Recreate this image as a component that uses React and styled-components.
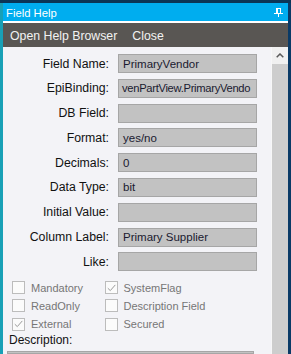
import React from 'react';
import styled, { createGlobalStyle } from 'styled-components';

const GlobalStyle = createGlobalStyle`
  html, body {
    margin: 0;
    padding: 0;
    background: #0b3556;
  }
  body {
    font-family: "Liberation Sans", Arial, sans-serif;
  }
`;

const Frame = styled.div`
  width: 291px;
  height: 354px;
  box-sizing: border-box;
  padding-top: 3px;
  background: #0b3556;
  display: flex;
  flex-direction: column;
  overflow: hidden;
`;

const Window = styled.div`
  flex: 1;
  min-height: 0;
  display: flex;
  flex-direction: column;
  border-left: 3px solid #18a0b6;
  border-right: 3px solid #0a3a66;
`;

const TitleBar = styled.div`
  height: 20px;
  box-sizing: border-box;
  border-bottom: 2px solid #ffffff;
  background: #00adef;
  color: #ffffff;
  font-size: 11.3px;
  display: flex;
  align-items: center;
  justify-content: space-between;
  padding: 1px 5px 0 3px;
`;

const MenuBar = styled.div`
  height: 24px;
  box-sizing: border-box;
  background: #595653;
  color: #f2f2f2;
  font-size: 12.3px;
  display: flex;
  align-items: center;
  gap: 15px;
  padding: 2px 0 0 7px;
`;

const MenuItem = styled.span`
  cursor: default;
`;

const Body = styled.div`
  flex: 1;
  min-height: 0;
  display: flex;
  overflow: hidden;
`;

const Form = styled.div`
  flex: 1;
  background: #f3f3f7;
  padding: 7px 14px 0 0;
  display: flex;
  flex-direction: column;
`;

const FieldGrid = styled.div`
  display: grid;
  grid-template-columns: 106px 1fr;
  grid-auto-rows: 19px;
  column-gap: 9px;
  row-gap: 5.8px;
  align-items: center;
`;

const Label = styled.div`
  text-align: right;
  font-size: 12.3px;
  color: #111111;
  white-space: nowrap;
`;

// long values are scrolled in the real control, so squeeze them to the edge
const Input = styled.div`
  height: 100%;
  box-sizing: border-box;
  border: 1px solid #a6a6a6;
  background: #c2c2c2;
  padding: ${({ $long }) => ($long ? '0 0 0 3px' : '0 4px')};
  font-size: ${({ $long }) => ($long ? '11.2px' : '11.5px')};
  letter-spacing: ${({ $long }) => ($long ? '-0.3px' : 'normal')};
  color: #1a1a30;
  display: flex;
  align-items: center;
  overflow: hidden;
  white-space: nowrap;
`;

const Checks = styled.div`
  display: grid;
  grid-template-columns: 92.5px 1fr;
  grid-auto-rows: 18.3px;
  padding-left: 9px;
  margin-top: 7px;
`;

const CheckItem = styled.div`
  display: flex;
  align-items: center;
  gap: 6px;
  font-size: 11px;
  color: #767676;
  white-space: nowrap;
`;

const Box = styled.span`
  width: 13px;
  height: 13px;
  box-sizing: border-box;
  border: 1px solid #bcbcbc;
  background: #fbfbfb;
  display: flex;
  align-items: center;
  justify-content: center;
  flex-shrink: 0;
`;

const DescLabel = styled.div`
  font-size: 12px;
  line-height: 15px;
  color: #111111;
  padding-left: 6px;
`;

const DescBox = styled.div`
  height: 40px;
  margin: 3px 3px 0 4px;
  border: 1px solid #a6a6a6;
  background: #c2c2c2;
`;

const Scrollbar = styled.div`
  width: 17px;
  box-sizing: border-box;
  border-left: 1px solid #f7f7f7;
  background: #cdcdcd;
  display: flex;
  flex-direction: column;
`;

const ArrowButton = styled.div`
  height: 17px;
  background: #f0f0f0;
  display: flex;
  align-items: center;
  justify-content: center;
`;

const PinIcon = () => (
  <svg width="9" height="9" viewBox="0 0 9 9">
    <rect x="2.5" y="0.5" width="4" height="5" fill="none" stroke="#fff" strokeWidth="1" />
    <rect x="2" y="0" width="2" height="6" fill="#fff" />
    <rect x="0" y="5" width="9" height="1" fill="#fff" />
    <rect x="4" y="5" width="1" height="4" fill="#fff" />
  </svg>
);

const Check = () => (
  <svg width="9" height="8" viewBox="0 0 9 8">
    <path d="M0.8 4.2 L3.3 6.6 L8.3 0.9" fill="none" stroke="#9a9a9a" strokeWidth="1" />
  </svg>
);

const fields = [
  ['Field Name:', 'PrimaryVendor'],
  ['EpiBinding:', 'venPartView.PrimaryVendo', true],
  ['DB Field:', ''],
  ['Format:', 'yes/no'],
  ['Decimals:', '0'],
  ['Data Type:', 'bit'],
  ['Initial Value:', ''],
  ['Column Label:', 'Primary Supplier'],
  ['Like:', ''],
];

const flags = [
  ['Mandatory', false],
  ['SystemFlag', true],
  ['ReadOnly', false],
  ['Description Field', false],
  ['External', true],
  ['Secured', false],
];

export default function App() {
  return (
    <>
      <GlobalStyle />
      <Frame>
        <Window>
          <TitleBar>
            <span>Field Help</span>
            <PinIcon />
          </TitleBar>
          <MenuBar>
            <MenuItem>Open Help Browser</MenuItem>
            <MenuItem>Close</MenuItem>
          </MenuBar>
          <Body>
            <Form>
              <FieldGrid>
                {fields.map(([label, value, long]) => (
                  <React.Fragment key={label}>
                    <Label>{label}</Label>
                    <Input $long={long}>{value}</Input>
                  </React.Fragment>
                ))}
              </FieldGrid>
              <Checks>
                {flags.map(([name, checked]) => (
                  <CheckItem key={name}>
                    <Box>{checked && <Check />}</Box>
                    {name}
                  </CheckItem>
                ))}
              </Checks>
              <DescLabel>Description:</DescLabel>
              <DescBox />
            </Form>
            <Scrollbar>
              <ArrowButton>
                <svg width="8" height="5" viewBox="0 0 8 5">
                  <path d="M0.7 4.3 L4 1 L7.3 4.3" fill="none" stroke="#5a5a5a" strokeWidth="1.5" />
                </svg>
              </ArrowButton>
            </Scrollbar>
          </Body>
        </Window>
      </Frame>
    </>
  );
}
